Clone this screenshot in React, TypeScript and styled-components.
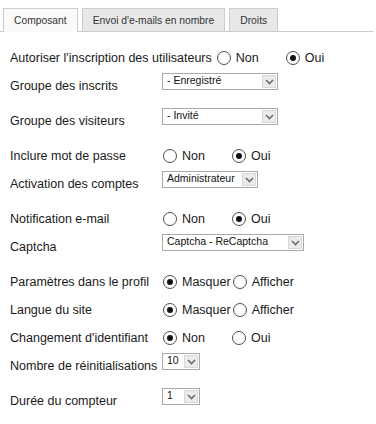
import React from 'react';
import styled, { createGlobalStyle } from 'styled-components';

const GlobalStyle = createGlobalStyle`
  body {
    margin: 0;
    background: #fff;
    font-family: "Liberation Sans", Arial, sans-serif;
    color: #1a1a1a;
  }
`;

type Option = { label: string; checked?: boolean };

type Field =
  | { kind: 'radio'; label: string; options: Option[] }
  | { kind: 'select'; label: string; value: string; width: number };

const fields: Field[] = [
  {
    kind: 'radio',
    label: "Autoriser l'inscription des utilisateurs",
    options: [{ label: 'Non' }, { label: 'Oui', checked: true }],
  },
  { kind: 'select', label: 'Groupe des inscrits', value: '- Enregistré', width: 116 },
  { kind: 'select', label: 'Groupe des visiteurs', value: '- Invité', width: 116 },
  {
    kind: 'radio',
    label: 'Inclure mot de passe',
    options: [{ label: 'Non' }, { label: 'Oui', checked: true }],
  },
  { kind: 'select', label: 'Activation des comptes', value: 'Administrateur', width: 96 },
  {
    kind: 'radio',
    label: 'Notification e-mail',
    options: [{ label: 'Non' }, { label: 'Oui', checked: true }],
  },
  { kind: 'select', label: 'Captcha', value: 'Captcha - ReCaptcha', width: 142 },
  {
    kind: 'radio',
    label: 'Paramètres dans le profil',
    options: [{ label: 'Masquer', checked: true }, { label: 'Afficher' }],
  },
  {
    kind: 'radio',
    label: 'Langue du site',
    options: [{ label: 'Masquer', checked: true }, { label: 'Afficher' }],
  },
  {
    kind: 'radio',
    label: "Changement d'identifiant",
    options: [{ label: 'Non', checked: true }, { label: 'Oui' }],
  },
  { kind: 'select', label: 'Nombre de réinitialisations', value: '10', width: 38 },
  { kind: 'select', label: 'Durée du compteur', value: '1', width: 38 },
];

const tabs = [
  { label: 'Composant', active: true },
  { label: "Envoi d'e-mails en nombre" },
  { label: 'Droits' },
];

const Chevron = () => (
  <svg width="9" height="6" viewBox="0 0 9 6">
    <polyline points="1,1 4.5,4.5 8,1" fill="none" stroke="#6b6b6b" strokeWidth="1.6" />
  </svg>
);

const App = () => {
  return (
    <Page>
      <GlobalStyle />
      <TabBar>
        {tabs.map((t) => (
          <Tab key={t.label} $active={!!t.active}>
            {t.label}
          </Tab>
        ))}
      </TabBar>

      <Form>
        {fields.map((f) =>
          f.kind === 'radio' ? (
            <Row key={f.label} $tall={false}>
              <Label>{f.label}</Label>
              <Options>
                {f.options.map((o) => (
                  <RadioOption key={o.label}>
                    <Circle $checked={!!o.checked} />
                    {o.label}
                  </RadioOption>
                ))}
              </Options>
            </Row>
          ) : (
            <Row key={f.label} $tall>
              <Label>{f.label}</Label>
              <Select $w={f.width}>
                <SelectValue>{f.value}</SelectValue>
                <ArrowBox>
                  <Chevron />
                </ArrowBox>
              </Select>
            </Row>
          )
        )}
      </Form>
    </Page>
  );
};

export default App;

const Page = styled.div`
  width: 376px;
  height: 424px;
  padding-top: 8px;
  box-sizing: border-box;
`;

const TabBar = styled.div`
  display: flex;
  gap: 4px;
  padding-left: 3px;
  margin-right: 2px;
  border-bottom: 1px solid #cccccc;
`;

const Tab = styled.div<{ $active: boolean }>`
  padding: 0 10px;
  display: flex;
  align-items: center;
  font-size: 10.3px;
  color: #333;
  border: 1px solid #cccccc;
  border-bottom: none;
  background: ${(p) => (p.$active ? '#fafafa' : '#e8e8e8')};
  margin-bottom: ${(p) => (p.$active ? '-1px' : '0')};
  height: ${(p) => (p.$active ? '23px' : '22px')};
`;

const Form = styled.div`
  display: flex;
  flex-direction: column;
  padding: 12px 0 0 10px;
`;

const Row = styled.div<{ $tall: boolean }>`
  display: flex;
  align-items: flex-start;
  height: ${(p) => (p.$tall ? '35px' : '28px')};
`;

const Label = styled.div`
  min-width: 152px;
  box-sizing: border-box;
  padding-right: 4px;
  line-height: 28px;
  font-size: 12.5px;
  color: #1a1a1a;
  white-space: nowrap;
`;

const Options = styled.div`
  display: flex;
  align-items: center;
  height: 28px;
  padding-left: 1px;
`;

const RadioOption = styled.span`
  display: inline-flex;
  align-items: center;
  gap: 5px;
  min-width: 67px;
  padding-right: 2px;
  font-size: 12.5px;
  color: #1a1a1a;
`;

const Circle = styled.span<{ $checked: boolean }>`
  width: 12px;
  height: 12px;
  border: 1px solid #4d4d4d;
  border-radius: 50%;
  background: #fff;
  box-sizing: content-box;
  display: flex;
  align-items: center;
  justify-content: center;
  flex-shrink: 0;

  &::after {
    content: '';
    display: ${(p) => (p.$checked ? 'block' : 'none')};
    width: 6px;
    height: 6px;
    border-radius: 50%;
    background: #111;
  }
`;

const Select = styled.div<{ $w: number }>`
  width: ${(p) => p.$w}px;
  height: 17px;
  margin-top: 1px;
  box-sizing: border-box;
  border: 1px solid #a9a9a9;
  background: #fff;
  display: flex;
  align-items: stretch;
`;

const SelectValue = styled.div`
  flex: 1;
  font-size: 10.5px;
  line-height: 13px;
  padding-left: 4px;
  color: #111;
  white-space: nowrap;
  overflow: hidden;
`;

const ArrowBox = styled.div`
  width: 14px;
  margin: 1px;
  background: #ebebeb;
  border: 1px solid #d8d8d8;
  box-sizing: border-box;
  display: flex;
  align-items: center;
  justify-content: center;
`;
